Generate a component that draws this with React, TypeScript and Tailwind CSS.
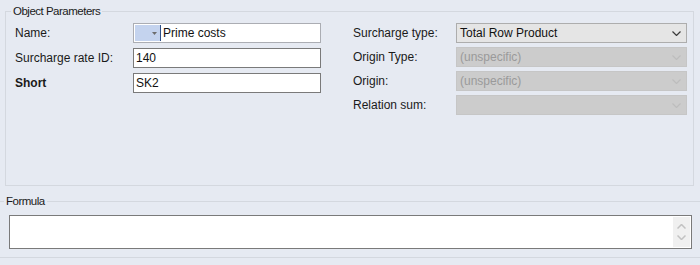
import React from "react";

const font = { fontFamily: '"Liberation Sans", Arial, sans-serif' };

function Chevron({ disabled = false }: { disabled?: boolean }) {
  return (
    <svg width="9" height="5" viewBox="0 0 9 5" className="mr-[5px] shrink-0">
      <path
        d="M0.5 0.5 L4.5 4.5 L8.5 0.5"
        fill="none"
        stroke={disabled ? "#bdbdbd" : "#3a3a3a"}
        strokeWidth="1.2"
      />
    </svg>
  );
}

function Combo({ value, disabled = false }: { value: string; disabled?: boolean }) {
  return (
    <div
      className={
        disabled
          ? "flex h-[20px] w-[231px] items-center justify-between border border-[#c6c6c6] bg-[#cccccc] pl-[3px] text-[#9a9a9a]"
          : "flex h-[20px] w-[231px] items-center justify-between border border-[#adadad] bg-[#e5e5e5] pl-[3px] text-[#111]"
      }
    >
      <span>{value}</span>
      <Chevron disabled={disabled} />
    </div>
  );
}

function TextBox({ value }: { value: string }) {
  return (
    <div className="flex h-[20px] w-[188px] items-center border border-[#7a7a7a] bg-white pl-[2px] text-[#111]">
      {value}
    </div>
  );
}

export default function App() {
  return (
    <div
      className="h-[265px] w-[700px] overflow-hidden bg-[#e6eaf2] pt-[4px] text-[12px] leading-[14px] text-[#1a1a1a]"
      style={font}
    >
      {/* Object Parameters */}
      <fieldset className="ml-[5px] mr-[6px] h-[182px] border border-[#d4d8df]">
        <legend className="ml-[5px] px-[2px] text-[11.5px] tracking-[-0.5px] text-[#1a1a1a]">
          Object Parameters
        </legend>
        <div className="flex pl-[9px] pt-[5px]">
          <div className="flex w-[306px] flex-col gap-[5px]">
            <div className="flex items-center">
              <span className="w-[118px]">Name:</span>
              <div className="flex h-[20px] w-[188px] items-center border border-[#abadb3] bg-white">
                <div className="ml-[1px] flex h-[16px] w-[25px] items-center justify-end bg-[#c4d3ee] pr-[3px]">
                  <svg width="5" height="3" viewBox="0 0 5 3">
                    <path d="M0 0 H5 L2.5 3 Z" fill="#6d6d6d" />
                  </svg>
                </div>
                <div className="h-[16px] w-[1px] bg-[#2f4f86]" />
                <span className="pl-[2px] text-[#111]">Prime costs</span>
              </div>
            </div>
            <div className="flex items-center">
              <span className="w-[118px]">Surcharge rate ID:</span>
              <TextBox value="140" />
            </div>
            <div className="flex items-center">
              <span className="w-[118px] font-bold">Short</span>
              <TextBox value="SK2" />
            </div>
          </div>
          <div className="ml-[32px] flex flex-col gap-[4px]">
            <div className="flex items-center">
              <span className="w-[103px]">Surcharge type:</span>
              <Combo value="Total Row Product" />
            </div>
            <div className="flex items-center">
              <span className="w-[103px]">Origin Type:</span>
              <Combo value="(unspecific)" disabled />
            </div>
            <div className="flex items-center">
              <span className="w-[103px]">Origin:</span>
              <Combo value="(unspecific)" disabled />
            </div>
            <div className="flex items-center">
              <span className="w-[103px]">Relation sum:</span>
              <Combo value="" disabled />
            </div>
          </div>
        </div>
      </fieldset>

      {/* Formula */}
      <fieldset className="mt-[8px] border-y border-[#d4d8df] pb-[8px]">
        <legend className="ml-[4px] px-[2px] text-[11.5px] tracking-[-0.5px]">Formula</legend>
        <div className="ml-[9px] mt-[7px] flex h-[34px] w-[683px] justify-end border border-[#7a7a7a] bg-white p-[1px]">
          <div className="flex w-[17px] flex-col items-center justify-center gap-[6px] bg-[#f0f0f0]">
            <svg width="9" height="5" viewBox="0 0 9 5">
              <path d="M0.5 4.5 L4.5 0.5 L8.5 4.5" fill="none" stroke="#c2c2c2" strokeWidth="1.5" />
            </svg>
            <svg width="9" height="5" viewBox="0 0 9 5">
              <path d="M0.5 0.5 L4.5 4.5 L8.5 0.5" fill="none" stroke="#c2c2c2" strokeWidth="1.5" />
            </svg>
          </div>
        </div>
      </fieldset>
    </div>
  );
}
